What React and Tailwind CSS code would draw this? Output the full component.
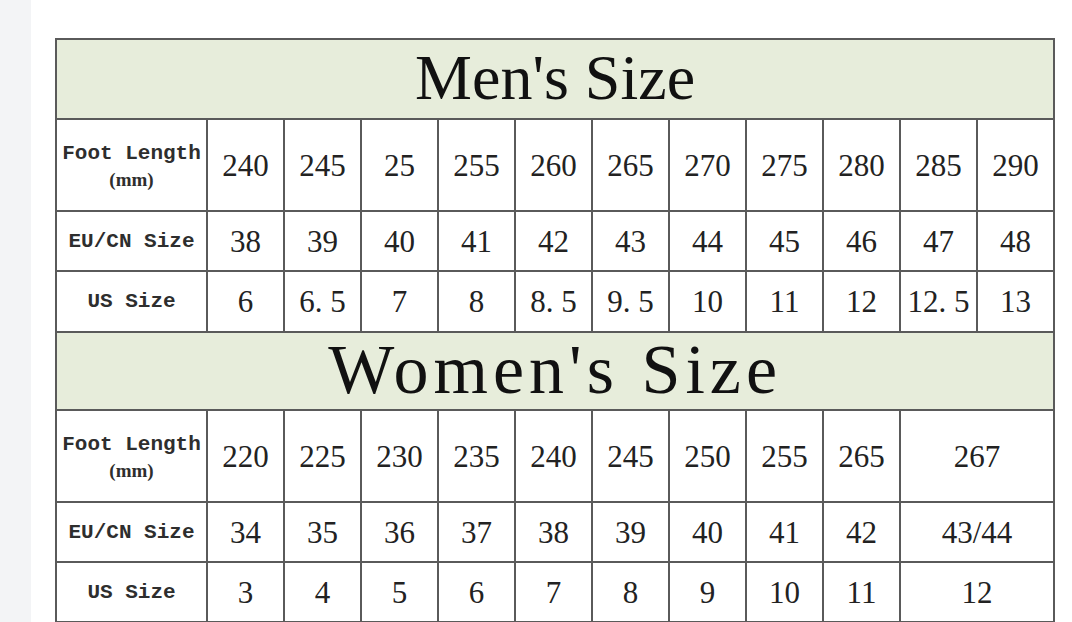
const men = {
  foot: ["240", "245", "25", "255", "260", "265", "270", "275", "280", "285", "290"],
  eu: ["38", "39", "40", "41", "42", "43", "44", "45", "46", "47", "48"],
  us: ["6", "6. 5", "7", "8", "8. 5", "9. 5", "10", "11", "12", "12. 5", "13"],
};

const women = {
  foot: ["220", "225", "230", "235", "240", "245", "250", "255", "265", "267"],
  eu: ["34", "35", "36", "37", "38", "39", "40", "41", "42", "43/44"],
  us: ["3", "4", "5", "6", "7", "8", "9", "10", "11", "12"],
};

const cell = "border-2 border-[#5a5a5a] text-center align-middle p-0";
const num = `${cell} text-[31px] text-[#222] font-['Liberation_Serif',serif] leading-none`;
const label = `${cell} text-[21px] font-bold text-[#2e2e2e] font-['Liberation_Mono',monospace] leading-[29px] whitespace-nowrap`;

function FootLabel() {
  return (
    <>
      <div>Foot Length</div>
      <div className="text-[19px] font-['Liberation_Serif',serif] font-bold leading-[24px]">(mm)</div>
    </>
  );
}

function Rows({ data, wide, heights }) {
  const rows = [
    { key: "foot", lbl: <FootLabel />, h: heights[0] },
    { key: "eu", lbl: "EU/CN Size", h: heights[1] },
    { key: "us", lbl: "US Size", h: heights[2] },
  ];
  return rows.map((r) => (
    <tr key={r.key} className={r.h}>
      <td className={label}>{r.lbl}</td>
      {data[r.key].map((v, i) => (
        <td
          key={i}
          colSpan={wide && i === data[r.key].length - 1 ? 2 : 1}
          className={num}
        >
          {v}
        </td>
      ))}
    </tr>
  ));
}

export default function App() {
  return (
    <div className="flex w-[1072px] h-[622px] overflow-hidden bg-white">
      <div className="w-[31px] shrink-0 bg-[#f3f4f6]" />
      <div className="pl-[24px] pt-[38px]">
        <table className="table-fixed border-collapse w-[998px]">
          <colgroup>
            <col className="w-[151px]" />
            {Array.from({ length: 11 }).map((_, i) => (
              <col key={i} className="w-[77px]" />
            ))}
          </colgroup>
          <tbody>
            <tr className="h-[80px]">
              <td
                colSpan={12}
                className={`${cell} bg-[#e7eddb] text-[64px] text-[#111] font-['Liberation_Serif',serif] leading-none pb-[2px]`}
              >
                Men's Size
              </td>
            </tr>
            <Rows data={men} heights={["h-[92px]", "h-[60px]", "h-[61px]"]} />
            <tr className="h-[78px]">
              <td
                colSpan={12}
                className={`${cell} bg-[#e7eddb] text-[70px] tracking-[5px] text-[#111] font-['Liberation_Serif',serif] leading-none pb-[2px]`}
              >
                Women's Size
              </td>
            </tr>
            <Rows data={women} wide heights={["h-[92px]", "h-[60px]", "h-[60px]"]} />
          </tbody>
        </table>
      </div>
    </div>
  );
}
